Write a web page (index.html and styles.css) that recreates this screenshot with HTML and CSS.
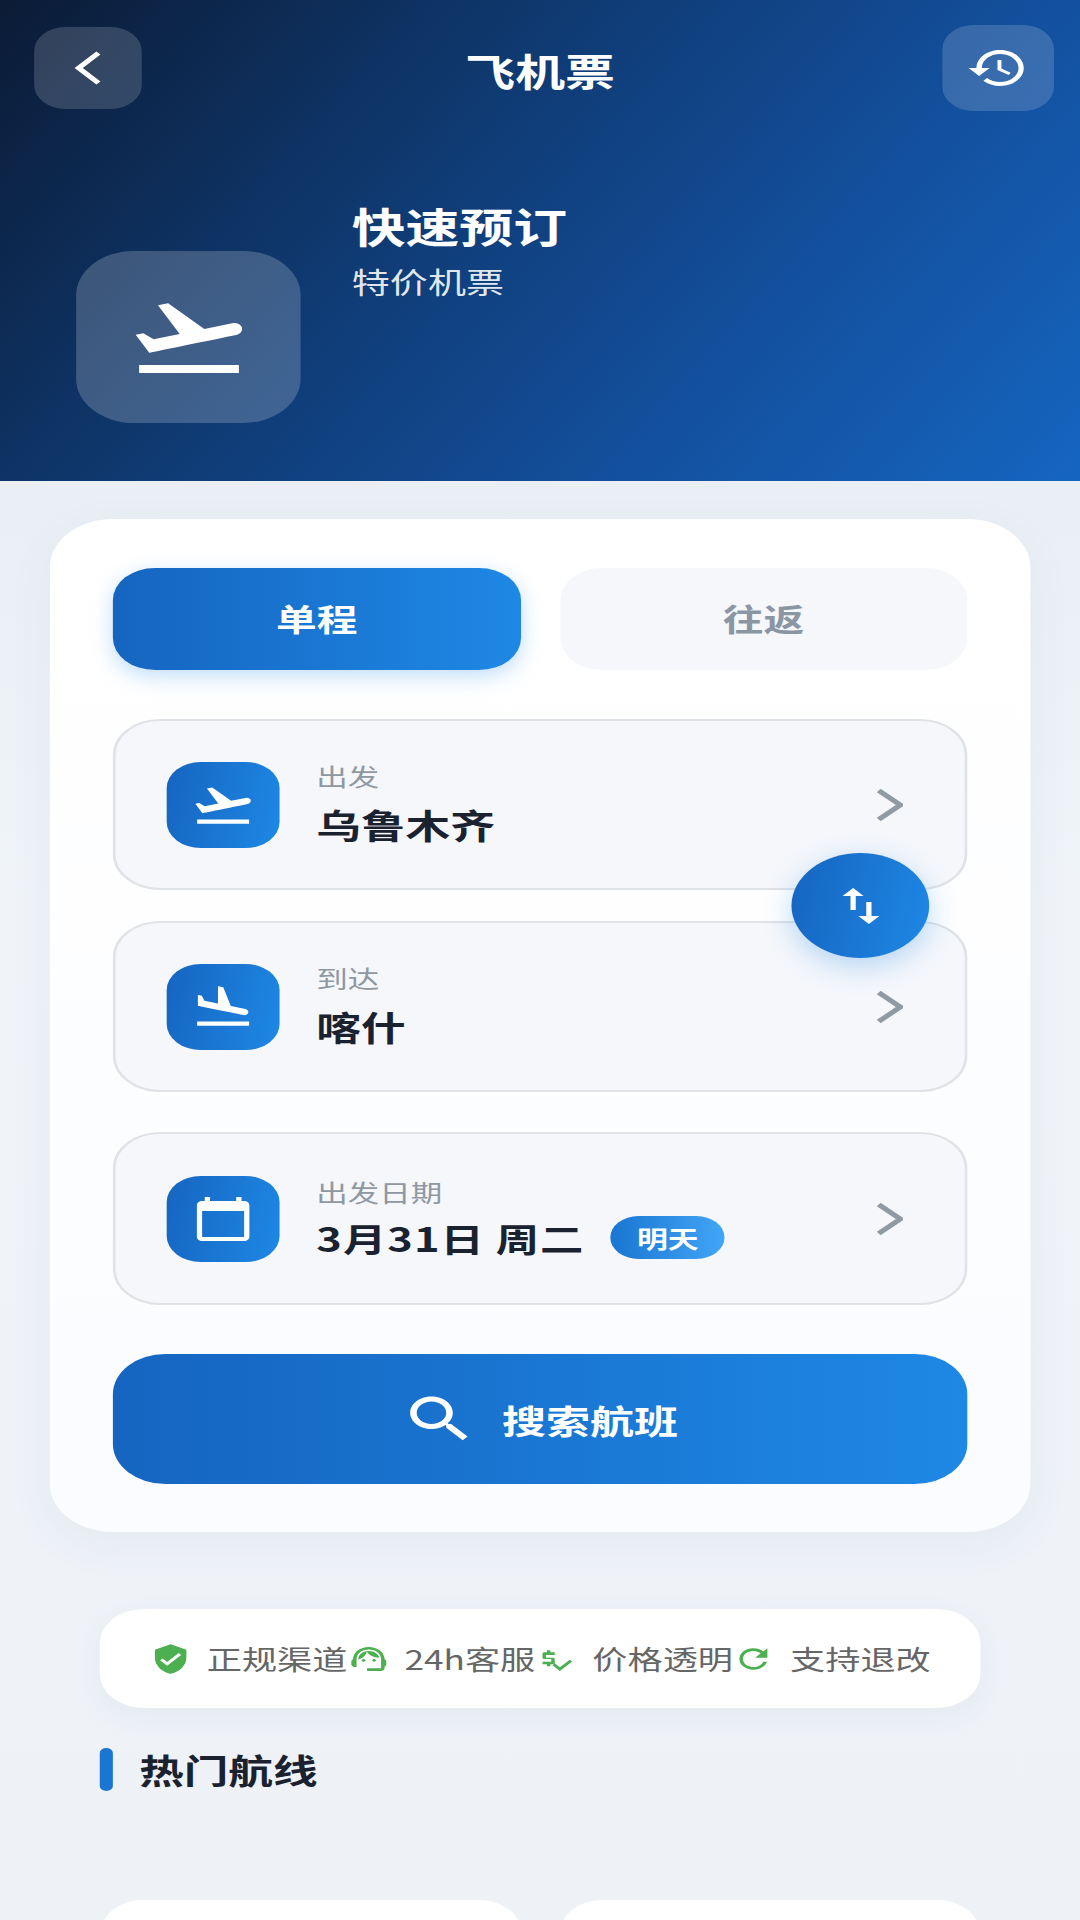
FILE: index.html
```html
<!DOCTYPE html>
<html lang="zh-CN">
<head>
<meta charset="utf-8">
<title>飞机票</title>
<link rel="stylesheet" href="styles.css">
</head>
<body>
<div class="app">
  <header class="header">
    <div class="nav">
      <button class="nav-btn back"><svg class="back-icon" viewBox="0 0 22 36"><path d="M19 3 4 18l15 15"/></svg></button>
      <h1 class="title">飞机票</h1>
      <button class="nav-btn hist"><svg class="i48" viewBox="0 0 24 24"><path d="M13 3c-4.97 0-9 4.03-9 9H1l3.89 3.89.07.14L9 12H6c0-3.87 3.13-7 7-7s7 3.13 7 7-3.13 7-7 7c-1.93 0-3.68-.79-4.94-2.06l-1.42 1.42C8.27 19.99 10.51 21 13 21c4.97 0 9-4.03 9-9s-4.03-9-9-9zm-1 5v5l4.28 2.54.72-1.21-3.5-2.08V8H12z"/></svg></button>
    </div>
    <div class="hero">
      <div class="hero-tile"><svg class="i96" viewBox="0 0 24 24"><path d="M2.5 19h19v2h-19zm19.57-9.36c-.21-.8-1.04-1.28-1.84-1.06L14.92 10l-6.9-6.43-1.93.51 4.14 7.17-4.97 1.33-1.97-1.54-1.45.39 2.59 4.49s7.12-1.9 16.57-4.43c.81-.23 1.28-1.05 1.07-1.85z"/></svg></div>
      <div class="hero-text">
        <div class="hero-title">快速预订</div>
        <div class="hero-sub">特价机票</div>
      </div>
    </div>
  </header>

  <main class="main">
    <section class="card">
      <div class="tabs">
        <div class="tab active">单程</div>
        <div class="tab">往返</div>
      </div>
      <div class="route">
        <div class="field">
          <div class="tile"><svg class="i50" viewBox="0 0 24 24"><path d="M2.5 19h19v2h-19zm19.57-9.36c-.21-.8-1.04-1.28-1.84-1.06L14.92 10l-6.9-6.43-1.93.51 4.14 7.17-4.97 1.33-1.97-1.54-1.45.39 2.59 4.49s7.12-1.9 16.57-4.43c.81-.23 1.28-1.05 1.07-1.85z"/></svg></div>
          <div class="field-text">
            <div class="label">出发</div>
            <div class="value">乌鲁木齐</div>
          </div>
          <svg class="chev" viewBox="0 0 20 32"><path d="M1.5 1.5 18 16 1.5 30.5"/></svg>
        </div>
        <div class="field">
          <div class="tile"><svg class="i50" viewBox="0 0 24 24"><path d="M2.5 19h19v2h-19zm7.18-5.73l4.35 1.16 5.31 1.42c.8.21 1.62-.26 1.84-1.06.21-.8-.26-1.62-1.06-1.84l-5.31-1.42-2.76-9.02L10.12 2v8.28L5.15 8.95l-.93-2.32-1.45-.39v5.17l1.6.43 5.31 1.43z"/></svg></div>
          <div class="field-text">
            <div class="label">到达</div>
            <div class="value">喀什</div>
          </div>
          <svg class="chev" viewBox="0 0 20 32"><path d="M1.5 1.5 18 16 1.5 30.5"/></svg>
        </div>
        <button class="swap"><svg class="i48" viewBox="0 0 24 24"><path d="M16 17.01V10h-2v7.01h-3L15 21l4-3.99h-3zM9 3L5 6.99h3V14h2V6.99h3L9 3z"/></svg></button>
      </div>
      <div class="field date-field">
        <div class="tile"><svg class="i48" viewBox="0 0 24 24"><path d="M20 3h-1V1h-2v2H7V1H5v2H4c-1.1 0-2 .9-2 2v16c0 1.1.9 2 2 2h16c1.1 0 2-.9 2-2V5c0-1.1-.9-2-2-2zm0 18H4V8h16v13z"/></svg></div>
        <div class="field-text">
          <div class="label">出发日期</div>
          <div class="date-row">
            <span class="value">3月31日 周二</span>
            <span class="badge">明天</span>
          </div>
        </div>
        <svg class="chev" viewBox="0 0 20 32"><path d="M1.5 1.5 18 16 1.5 30.5"/></svg>
      </div>
      <button class="search"><svg class="i60" viewBox="0 0 24 24"><path d="M15.5 14h-.79l-.28-.27C15.41 12.59 16 11.11 16 9.5 16 5.91 13.09 3 9.5 3S3 5.91 3 9.5 5.91 16 9.5 16c1.61 0 3.09-.59 4.23-1.57l.27.28v.79l5 4.99L20.49 19l-4.99-5zm-6 0C7.01 14 5 11.99 5 9.5S7.01 5 9.5 5 14 7.01 14 9.5 11.99 14 9.5 14z"/></svg><span>搜索航班</span></button>
    </section>

    <section class="trust">
      <div class="trust-item"><svg class="ti" viewBox="0 0 24 24"><path d="M12 1L3 5v6c0 5.55 3.84 10.74 9 12 5.16-1.26 9-6.45 9-12V5l-9-4zm-2 16l-4-4 1.41-1.41L10 14.17l6.59-6.59L18 9l-8 8z"/></svg><span>正规渠道</span></div>
      <div class="trust-item"><svg class="ti" viewBox="0 0 24 24"><path d="M21 12.22C21 6.73 16.74 3 12 3c-4.69 0-9 3.65-9 9.28-.6.34-1 .98-1 1.72v2c0 1.1.9 2 2 2h1v-6.1c0-3.87 3.13-7 7-7s7 3.13 7 7V19h-8v2h8c1.1 0 2-.9 2-2v-1.22c.59-.31 1-.92 1-1.61v-2.3c0-.67-.41-1.28-1-1.65z"/><circle cx="9" cy="13" r="1"/><circle cx="15" cy="13" r="1"/><path d="M18 11.03C17.52 8.18 15.04 6 12.05 6c-3.03 0-6.29 2.51-6.03 6.45 2.47-1.01 4.33-3.21 4.86-5.89 1.31 2.63 4 4.44 7.12 4.47z"/></svg><span>24h客服</span></div>
      <div class="trust-item"><svg class="ti" viewBox="0 0 24 24"><path d="M11 13v-1c0-.55-.45-1-1-1H6V9h5V7H8.5V5.5h-2V7H5c-.55 0-1 .45-1 1v3c0 .55.45 1 1 1h4v2H4v2h2.5v1.5h2V16H10c.55 0 1-.45 1-1v-2zM19.59 12.52l-5.66 5.66-2.83-2.83-1.41 1.41 4.24 4.24 7.07-7.07z"/></svg><span>价格透明</span></div>
      <div class="trust-item"><svg class="ti" viewBox="0 0 24 24"><path d="M17.65 6.35C16.2 4.9 14.21 4 12 4c-4.42 0-7.99 3.58-7.99 8s3.57 8 7.99 8c3.73 0 6.84-2.55 7.73-6h-2.08c-.82 2.33-3.04 4-5.65 4-3.31 0-6-2.69-6-6s2.69-6 6-6c1.66 0 3.14.69 4.22 1.78L13 11h7V4l-2.35 2.35z"/></svg><span>支持退改</span></div>
    </section>

    <h2 class="section-title">热门航线</h2>

    <section class="routes">
      <div class="route-card"></div>
      <div class="route-card"></div>
    </section>
  </main>
</div>
</body>
</html>
```

FILE: styles.css
```css
* { box-sizing: border-box; margin: 0; padding: 0; }
html, body { width: 1080px; height: 1920px; overflow: hidden; background: #eef2f8; }
body { font-family: "Noto Sans CJK SC", "Noto Sans", sans-serif; }
button { border: 0; font: inherit; color: inherit; }

/* The reference is stretched horizontally; the whole page shares that stretch. */
.app {
  width: 823px;
  height: 1920px;
  overflow: hidden;
  transform: scaleX(1.3125);
  transform-origin: 0 0;
  background: linear-gradient(180deg, #e9eff5 481px, #f0f4f8 900px, #eef2f7 100%);
}

.header {
  height: 481px;
  padding: 25px 20px 0 26px;
  background: linear-gradient(125deg, #0b1b35 0%, #0f3a72 38%, #134f9c 68%, #1565c0 100%);
  color: #fff;
}
.nav { display: flex; align-items: center; justify-content: space-between; height: 86px; }
.nav-btn { display: flex; align-items: center; justify-content: center; background: rgba(255,255,255,.16); }
.back { width: 82px; height: 82px; border-radius: 24px; }
.hist { width: 85px; height: 86px; border-radius: 24px; }
.back-icon { width: 22px; height: 36px; fill: none; stroke: #fff; stroke-width: 4.5; }
.title { font-size: 38px; font-weight: 700; line-height: 50px; margin: 3px 3px 0 0; }
.i48, .i50, .i60, .i96 { fill: #fff; display: block; flex: none; }
.i48 { width: 48px; height: 48px; }
.i50 { width: 50px; height: 50px; }
.i60 { width: 60px; height: 60px; }
.i96 { width: 96px; height: 96px; }

.hero { display: flex; align-items: flex-start; padding: 85px 0 0 32px; gap: 39px; }
.hero-tile {
  width: 171px; height: 172px; margin-top: 55px;
  border-radius: 44px;
  display: flex; align-items: center; justify-content: center;
  background: rgba(255,255,255,.2);
}
.hero-title { font-size: 41px; font-weight: 700; line-height: 58px; }
.hero-sub { font-size: 29px; line-height: 40px; margin-top: 7px; color: rgba(255,255,255,.9); }

.main { padding: 38px 0 0; }
.card {
  width: 747px;
  margin-left: 38px;
  padding: 49px 48px 48px;
  border-radius: 48px;
  background: linear-gradient(180deg, #fff, #fbfcff);
  box-shadow: 0 12px 40px rgba(60,90,140,.06);
}
.tabs { display: flex; gap: 30px; }
.tab {
  flex: 1; height: 102px; border-radius: 32px; padding-bottom: 3px;
  display: flex; align-items: center; justify-content: center;
  font-size: 31px; font-weight: 700; color: #8a96a3; background: #f5f7fb;
}
.tab.active {
  color: #fff;
  background: linear-gradient(90deg, #1565c0, #1e88e5);
  box-shadow: 0 6px 18px rgba(30,136,229,.28);
}
.route { position: relative; display: flex; flex-direction: column; gap: 31px; margin-top: 49px; }
.field {
  display: flex; align-items: center; height: 171px;
  padding: 0 47px 0 39px;
  border: 2px solid #dfe2e6; border-radius: 36px;
  background: #f5f7fb;
}
.tile {
  width: 86px; height: 86px; flex: none; border-radius: 26px;
  display: flex; align-items: center; justify-content: center;
  background: linear-gradient(100deg, #1565c0, #1e88e5);
}
.field-text { flex: 1; margin-left: 28px; }
.label { font-size: 24px; line-height: 30px; color: #8e98a3; }
.value { font-size: 34px; font-weight: 700; line-height: 46px; color: #1a2230; margin-top: 11px; }
.chev { width: 20px; height: 32px; flex: none; fill: none; stroke: #8f9aa3; stroke-width: 4.5; }
.date-field { margin-top: 40px; height: 173px; }
.date-row { display: flex; align-items: center; gap: 20px; margin-top: 8px; }
.date-row .value { margin-top: 0; font-size: 33px; letter-spacing: .8px; }
.badge {
  width: 87px; height: 43px; border-radius: 22px;
  display: flex; align-items: center; justify-content: center;
  font-size: 23.5px; font-weight: 700; color: #fff;
  background: linear-gradient(90deg, #1976d2, #42a5f5);
}
.swap {
  position: absolute; right: 29px; top: 134px;
  width: 105px; height: 105px; border-radius: 50%;
  display: flex; align-items: center; justify-content: center;
  background: linear-gradient(100deg, #1565c0, #1e88e5);
  box-shadow: 0 8px 24px rgba(30,136,229,.3);
}
.search {
  width: 100%; height: 130px; margin-top: 49px; padding-right: 2px; border-radius: 40px;
  display: flex; align-items: center; justify-content: center; gap: 18px;
  font-size: 33.5px; font-weight: 700; color: #fff;
  background: linear-gradient(90deg, #1565c0, #1e88e5);
}

.trust {
  width: 671px; height: 99px; margin: 77px 0 0 76px;
  padding: 0 39px 0 38px;
  display: flex; align-items: center; justify-content: space-between;
  border-radius: 34px; background: #fff;
  box-shadow: 0 8px 24px rgba(60,90,140,.06);
}
.trust-item { display: flex; align-items: center; gap: 11.5px; font-size: 26.8px; line-height: 36px; color: #666; white-space: nowrap; }
.ti { width: 32px; height: 32px; flex: none; fill: #4caf50; display: block; }
.section-title {
  position: relative;
  margin: 40px 0 0 76px; height: 43px; padding-left: 30px;
  display: flex; align-items: center;
  font-size: 34px; font-weight: 700; color: #1a2230;
}
.section-title::before {
  content: ""; position: absolute; left: 0; top: 0;
  width: 10px; height: 43px; border-radius: 5px; background: #1976d2;
}
.routes { display: flex; gap: 30px; margin: 109px 0 0 77px; width: 669px; }
.route-card { flex: 1; height: 200px; border-radius: 32px; background: #fff; }
```
